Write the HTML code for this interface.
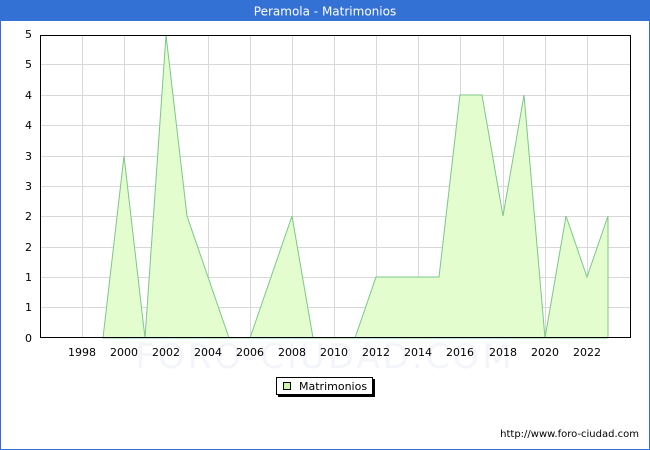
<!DOCTYPE html><html><head><meta charset="utf-8"><style>body{margin:0;background:#fff}svg{display:block}text{font-family:"DejaVu Sans","Liberation Sans",sans-serif;font-size:11px;fill:#000}</style></head><body>
<svg width="650" height="450" viewBox="0 0 650 450">
<rect x="0.5" y="0.5" width="649" height="449" fill="#fff" stroke="#3371d5"/>
<rect x="0" y="0" width="650" height="21" fill="#3371d5"/>
<text x="325" y="15.5" text-anchor="middle" style="fill:#fff;font-size:12px">Peramola - Matrimonios</text>
<g stroke="#d8d8d8" stroke-width="1">
<line x1="40" y1="307.5" x2="631" y2="307.5"/><line x1="40" y1="277.5" x2="631" y2="277.5"/><line x1="40" y1="247.5" x2="631" y2="247.5"/><line x1="40" y1="216.5" x2="631" y2="216.5"/><line x1="40" y1="186.5" x2="631" y2="186.5"/><line x1="40" y1="156.5" x2="631" y2="156.5"/><line x1="40" y1="125.5" x2="631" y2="125.5"/><line x1="40" y1="95.5" x2="631" y2="95.5"/><line x1="40" y1="64.5" x2="631" y2="64.5"/>
<line x1="82.5" y1="35" x2="82.5" y2="338"/><line x1="124.5" y1="35" x2="124.5" y2="338"/><line x1="166.5" y1="35" x2="166.5" y2="338"/><line x1="208.5" y1="35" x2="208.5" y2="338"/><line x1="250.5" y1="35" x2="250.5" y2="338"/><line x1="292.5" y1="35" x2="292.5" y2="338"/><line x1="334.5" y1="35" x2="334.5" y2="338"/><line x1="376.5" y1="35" x2="376.5" y2="338"/><line x1="418.5" y1="35" x2="418.5" y2="338"/><line x1="460.5" y1="35" x2="460.5" y2="338"/><line x1="503.5" y1="35" x2="503.5" y2="338"/><line x1="545.5" y1="35" x2="545.5" y2="338"/><line x1="587.5" y1="35" x2="587.5" y2="338"/>
</g>
<text x="325" y="368" text-anchor="middle" style="font-size:34px;fill:#f3f5fa;letter-spacing:3px">FORO-CIUDAD.COM</text>
<polygon fill="#e3fdcf" stroke="#7cc68a" stroke-width="1" points="103,338 124,156 145,338 166,35 187,216 208,277 229,338 250,338 271,277 292,216 313,338 334,338 355,338 376,277 397,277 418,277 439,277 460,95 482,95 503,216 524,95 545,338 566,216 587,277 608,216 608,338"/>
<rect x="40.5" y="35.5" width="590" height="302" fill="none" stroke="#000"/>
<g text-anchor="end"><text x="32" y="342">0</text><text x="32" y="311">1</text><text x="32" y="281">1</text><text x="32" y="251">2</text><text x="32" y="220">2</text><text x="32" y="190">3</text><text x="32" y="160">3</text><text x="32" y="129">4</text><text x="32" y="99">4</text><text x="32" y="68">5</text><text x="32" y="38">5</text></g>
<g text-anchor="middle"><text x="82" y="356">1998</text><text x="124" y="356">2000</text><text x="166" y="356">2002</text><text x="208" y="356">2004</text><text x="250" y="356">2006</text><text x="292" y="356">2008</text><text x="334" y="356">2010</text><text x="376" y="356">2012</text><text x="418" y="356">2014</text><text x="460" y="356">2016</text><text x="503" y="356">2018</text><text x="545" y="356">2020</text><text x="587" y="356">2022</text></g>
<rect x="278" y="379" width="97" height="18" fill="#000"/>
<rect x="276.5" y="377.5" width="96" height="17" fill="#fff" stroke="#000"/>
<rect x="283.5" y="382.5" width="7" height="7" fill="#ccf5a5" stroke="#000"/>
<text x="299" y="390">Matrimonios</text>
<text x="639" y="437" text-anchor="end" style="font-size:10px">http://www.foro-ciudad.com</text>
</svg></body></html>
